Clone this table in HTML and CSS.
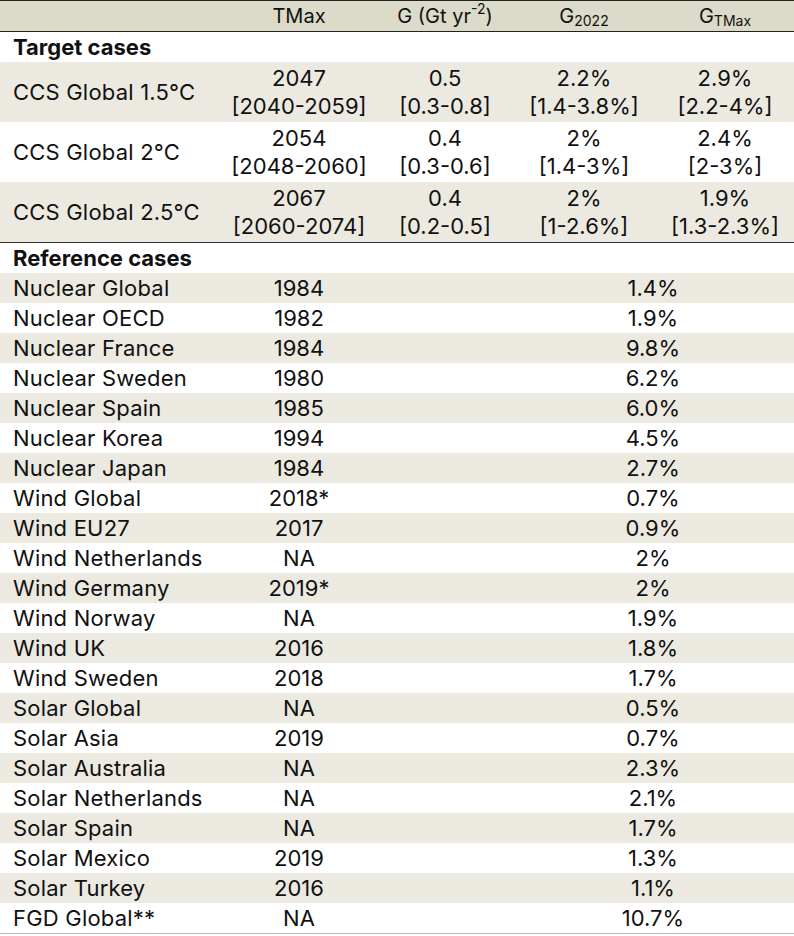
FILE: index.html
```html
<!DOCTYPE html>
<html>
<head>
<meta charset="utf-8">
<link rel="stylesheet" href="styles.css">
</head>
<body>
<table class="tbl">
  <colgroup>
    <col class="c-label"><col class="c-tmax"><col class="c-g"><col class="c-g22"><col class="c-gt">
  </colgroup>
  <thead>
    <tr class="head">
      <th></th>
      <th>TMax</th>
      <th>G (Gt yr<sup>-2</sup>)</th>
      <th>G<sub>2022</sub></th>
      <th>G<sub>TMax</sub></th>
    </tr>
  </thead>
  <tbody class="target">
    <tr class="section"><td colspan="5">Target cases</td></tr>
    <tr class="tall shade">
      <td class="lbl">CCS Global 1.5°C</td>
      <td>2047<br>[2040-2059]</td>
      <td>0.5<br>[0.3-0.8]</td>
      <td>2.2%<br>[1.4-3.8%]</td>
      <td>2.9%<br>[2.2-4%]</td>
    </tr>
    <tr class="tall">
      <td class="lbl">CCS Global 2°C</td>
      <td>2054<br>[2048-2060]</td>
      <td>0.4<br>[0.3-0.6]</td>
      <td>2%<br>[1.4-3%]</td>
      <td>2.4%<br>[2-3%]</td>
    </tr>
    <tr class="tall shade last">
      <td class="lbl">CCS Global 2.5°C</td>
      <td>2067<br>[2060-2074]</td>
      <td>0.4<br>[0.2-0.5]</td>
      <td>2%<br>[1-2.6%]</td>
      <td>1.9%<br>[1.3-2.3%]</td>
    </tr>
  </tbody>
  <tbody class="ref">
    <tr class="section"><td colspan="5">Reference cases</td></tr>
    <tr class="shade"><td class="lbl">Nuclear Global</td><td>1984</td><td></td><td colspan="2">1.4%</td></tr>
    <tr><td class="lbl">Nuclear OECD</td><td>1982</td><td></td><td colspan="2">1.9%</td></tr>
    <tr class="shade"><td class="lbl">Nuclear France</td><td>1984</td><td></td><td colspan="2">9.8%</td></tr>
    <tr><td class="lbl">Nuclear Sweden</td><td>1980</td><td></td><td colspan="2">6.2%</td></tr>
    <tr class="shade"><td class="lbl">Nuclear Spain</td><td>1985</td><td></td><td colspan="2">6.0%</td></tr>
    <tr><td class="lbl">Nuclear Korea</td><td>1994</td><td></td><td colspan="2">4.5%</td></tr>
    <tr class="shade"><td class="lbl">Nuclear Japan</td><td>1984</td><td></td><td colspan="2">2.7%</td></tr>
    <tr><td class="lbl">Wind Global</td><td>2018*</td><td></td><td colspan="2">0.7%</td></tr>
    <tr class="shade"><td class="lbl">Wind EU27</td><td>2017</td><td></td><td colspan="2">0.9%</td></tr>
    <tr><td class="lbl">Wind Netherlands</td><td>NA</td><td></td><td colspan="2">2%</td></tr>
    <tr class="shade"><td class="lbl">Wind Germany</td><td>2019*</td><td></td><td colspan="2">2%</td></tr>
    <tr><td class="lbl">Wind Norway</td><td>NA</td><td></td><td colspan="2">1.9%</td></tr>
    <tr class="shade"><td class="lbl">Wind UK</td><td>2016</td><td></td><td colspan="2">1.8%</td></tr>
    <tr><td class="lbl">Wind Sweden</td><td>2018</td><td></td><td colspan="2">1.7%</td></tr>
    <tr class="shade"><td class="lbl">Solar Global</td><td>NA</td><td></td><td colspan="2">0.5%</td></tr>
    <tr><td class="lbl">Solar Asia</td><td>2019</td><td></td><td colspan="2">0.7%</td></tr>
    <tr class="shade"><td class="lbl">Solar Australia</td><td>NA</td><td></td><td colspan="2">2.3%</td></tr>
    <tr><td class="lbl">Solar Netherlands</td><td>NA</td><td></td><td colspan="2">2.1%</td></tr>
    <tr class="shade"><td class="lbl">Solar Spain</td><td>NA</td><td></td><td colspan="2">1.7%</td></tr>
    <tr><td class="lbl">Solar Mexico</td><td>2019</td><td></td><td colspan="2">1.3%</td></tr>
    <tr class="shade"><td class="lbl">Solar Turkey</td><td>2016</td><td></td><td colspan="2">1.1%</td></tr>
    <tr class="final"><td class="lbl">FGD Global**</td><td>NA</td><td></td><td colspan="2">10.7%</td></tr>
  </tbody>
</table>
</body>
</html>
```

FILE: styles.css
```css
html, body {
  margin: 0;
  padding: 0;
  background: #ffffff;
}

.tbl {
  width: 794px;
  border-collapse: collapse;
  table-layout: fixed;
  font-family: Inter, "Noto Sans", "Liberation Sans", sans-serif;
  font-size: 22px;
  color: #111111;
}

.c-label { width: 220px; }
.c-tmax { width: 158px; }
.c-g { width: 134px; }
.c-g22 { width: 144px; }
.c-gt { width: 138px; }

.tbl th,
.tbl td {
  padding: 0;
  height: 30px;
  text-align: center;
  vertical-align: middle;
  font-weight: 400;
  line-height: 30px;
  white-space: nowrap;
}

.head th {
  background: #dcdac8;
  border-top: 1px solid #222222;
  border-bottom: 1px solid #222222;
  height: 30px;
  font-size: 20px;
}

.head sub {
  font-size: 14px;
  vertical-align: -3px;
  line-height: 0;
}

.head sup {
  font-size: 14px;
  vertical-align: 9px;
  line-height: 0;
}

.section td {
  text-align: left;
  font-weight: 700;
  padding-left: 13px;
}

.tbl td.lbl {
  text-align: left;
  padding-left: 13px;
  letter-spacing: 0.2px;
}

.tall td {
  height: 60px;
  line-height: 28px;
}

.shade td {
  background: #ebe9e0;
}

.last td {
  border-bottom: 1px solid #333333;
}

.final td {
  border-bottom: 1px solid #b8b8b8;
}
```
